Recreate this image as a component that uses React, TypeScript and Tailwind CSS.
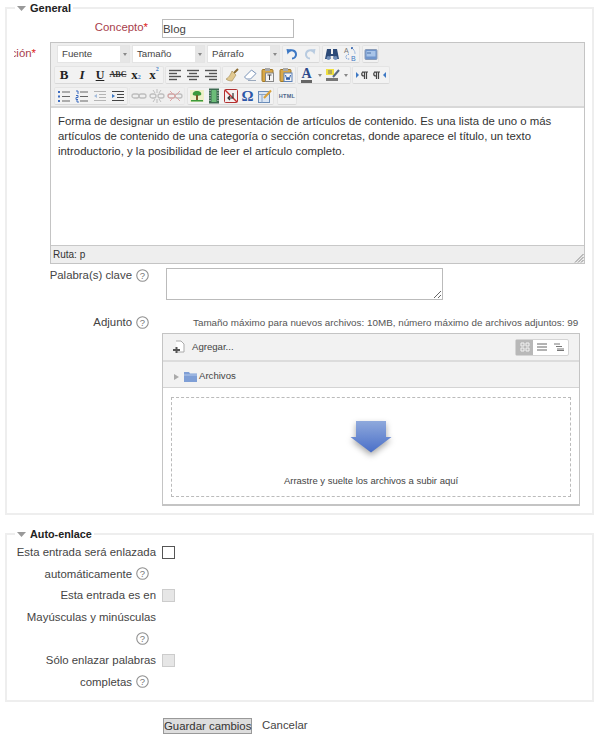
import type { ReactNode } from "react";

function Svg({ children, w = 16, h = 16 }: { children: ReactNode; w?: number; h?: number }) {
    return (
        <svg width={w} height={h} viewBox={`0 0 ${w} ${h}`} fill="none">
            {children}
        </svg>
    )
}

function Lines({ rows, color = "#555" }: { rows: [number, number][]; color?: string }) {
    return (
        <Svg w={14} h={12}>
            {rows.map(([x1, x2], i) => (
                <path key={i} d={`M${x1} ${1.5 + i * 3}H${x2}`} stroke={color} strokeWidth="1.4" />
            ))}
        </Svg>
    )
}

function Btn({ children, w = "w-[18px]" }: { children: ReactNode; w?: string }) {
    return <div className={`${w} h-[16px] flex items-center justify-center shrink-0`}>{children}</div>
}

function Group({ children, off }: { children: ReactNode; off?: boolean }) {
    return (
        <div className={`flex items-center h-[18px] border border-[#e4e4e4] border-b-[#d8d8d8] rounded-[2px] bg-[#f2f2f2] shrink-0 ${off ? "opacity-40" : ""}`}>
            {children}
        </div>
    )
}

function Caret() {
    return <span className="w-0 h-0 border-x-[2.5px] border-x-transparent border-t-[3px] border-t-[#888]" />
}

function Select({ label }: { label: string }) {
    return (
        <div className="flex w-[73px] h-[18px] border border-[#e4e4e4] shrink-0">
            <div className="w-[62px] bg-white pl-[4px] text-[9.7px] leading-[16px] text-[#444]">{label}</div>
            <div className="flex-1 bg-[#e6e6e6] flex items-center justify-center">
                <Caret />
            </div>
        </div>
    )
}

function Help() {
    return (
        <svg width="13" height="13" viewBox="0 0 13 13" className="inline-block ml-[4px] mr-[7px] align-[-2.5px]">
            <circle cx="6.5" cy="6.5" r="5.75" fill="#fff" stroke="#909090" strokeWidth="1.1" />
            <text x="6.5" y="10" textAnchor="middle" fontSize="9.5" fontFamily="Liberation Sans" fill="#777">?</text>
        </svg>
    )
}

function Triangle() {
    return (
        <svg width="9" height="5" viewBox="0 0 9 5" className="shrink-0">
            <path d="M0 0H9L4.5 5Z" fill="#999" />
        </svg>
    )
}

function Legend({ title, size }: { title: string; size: string }) {
    return (
        <legend className="ml-[8px] px-[2px]">
            <div className={`flex items-center gap-[4px] h-[14px] ${size} font-bold text-[#222]`}>
                <Triangle />
                {title}
            </div>
        </legend>
    )
}

function Toolbar() {
    return (
        <div className="h-[65px] bg-[#eeeeee] border-b-2 border-[#d8d8d8] pt-[2px]">
            <div className="flex items-center gap-[2px] ml-[6px] h-[18px]">
                <Select label="Fuente" />
                <Select label="Tamaño" />
                <Select label="Párrafo" />
                <Group>
                    <Btn>
                        <Svg>
                            <path d="M5 5.5C7 3.5 11.5 4 12 8C12.3 11 10 12.5 8 12.5" stroke="#3d78c4" strokeWidth="2" />
                            <path d="M2.5 3L7.5 3.5L3.5 8.5Z" fill="#3d78c4" />
                        </Svg>
                    </Btn>
                    <Btn>
                        <Svg>
                            <path d="M11 5.5C9 3.5 4.5 4 4 8C3.7 11 6 12.5 8 12.5" stroke="#b8cbe0" strokeWidth="2" />
                            <path d="M13.5 3L8.5 3.5L12.5 8.5Z" fill="#b8cbe0" />
                        </Svg>
                    </Btn>
                </Group>
                <Group>
                    <Btn>
                        <Svg>
                            <path d="M3 3H7V8H9V3H13L15 13H9.5V10H6.5V13H1Z" fill="#2c4a78" />
                            <circle cx="4.5" cy="12" r="2" fill="#6f8db8" />
                            <circle cx="11.5" cy="12" r="2" fill="#6f8db8" />
                        </Svg>
                    </Btn>
                    <Btn>
                        <Svg>
                            <text x="2" y="7" fontSize="7" fontFamily="Liberation Sans" fill="#777">A</text>
                            <text x="9" y="15" fontSize="7" fontFamily="Liberation Sans" fill="#3d78c4">B</text>
                            <path d="M9 2.5C12 3 13 5 13 8M7 8C4 9 3 11 5 13H8" stroke="#5a8ad0" strokeWidth="1" strokeDasharray="1 1" />
                            <circle cx="10" cy="2" r="1" fill="#2c5ca8" />
                        </Svg>
                    </Btn>
                </Group>
                <Group>
                    <Btn w="w-[15px]">
                        <Svg w={14} h={13}>
                            <rect x="1" y="1.5" width="12" height="10" rx="1" fill="#6f95cc" stroke="#8a9cb8" />
                            <rect x="2.5" y="3" width="9" height="5.5" fill="#a8c4e8" />
                            <path d="M3 5H7" stroke="#4a70a8" />
                        </Svg>
                    </Btn>
                </Group>
            </div>
            <div className="flex items-center gap-[1px] ml-[3px] mt-[3px] h-[18px]">
                <Group>
                    <Btn><span className="font-['Liberation_Serif'] font-bold text-[13px] text-[#222]">B</span></Btn>
                    <Btn><span className="font-['Liberation_Serif'] font-bold italic text-[13px] text-[#222]">I</span></Btn>
                    <Btn><span className="font-['Liberation_Serif'] font-bold underline text-[12px] text-[#222]">U</span></Btn>
                    <Btn><span className="font-['Liberation_Serif'] font-bold line-through text-[8px] text-[#333]">ABC</span></Btn>
                    <Btn><span className="font-['Liberation_Serif'] font-bold text-[13px] text-[#222]">x<span className="text-[6px] text-[#3d78c4]">2</span></span></Btn>
                    <Btn><span className="font-['Liberation_Serif'] font-bold text-[13px] text-[#222] flex items-start">x<span className="text-[6px] leading-[8px] text-[#3d78c4]">2</span></span></Btn>
                </Group>
                <Group>
                    <Btn><Lines rows={[[1, 13], [1, 9], [1, 13], [1, 9]]} /></Btn>
                    <Btn><Lines rows={[[1, 13], [3, 11], [1, 13], [3, 11]]} /></Btn>
                    <Btn><Lines rows={[[1, 13], [5, 13], [1, 13], [5, 13]]} /></Btn>
                </Group>
                <Group>
                    <Btn>
                        <Svg>
                            <path d="M10 6L14 2" stroke="#8a6a30" strokeWidth="2" />
                            <path d="M8 4L12 8L8 14C5 14 3 13 2 12C4 11 6 9 8 4Z" fill="#e0c890" stroke="#a08850" strokeWidth=".6" />
                        </Svg>
                    </Btn>
                    <Btn>
                        <Svg>
                            <path d="M9.5 3L14 6.5L8.5 12H4.5L2.5 10Z" fill="#fff" stroke="#7a93b8" />
                            <path d="M6 13.5H14" stroke="#9aa8bc" />
                        </Svg>
                    </Btn>
                    <Btn>
                        <Svg>
                            <rect x="2" y="2.5" width="11" height="12" rx="1" fill="#d8a848" stroke="#a07828" />
                            <rect x="5" y="1" width="5" height="3" fill="#a8a8a8" />
                            <rect x="5.5" y="6" width="8" height="8.5" fill="#f4f4f4" stroke="#888" />
                            <path d="M7.5 8H11.5M9.5 8V13" stroke="#444" />
                        </Svg>
                    </Btn>
                    <Btn>
                        <Svg>
                            <rect x="2" y="2.5" width="11" height="12" rx="1" fill="#d8a848" stroke="#a07828" />
                            <rect x="5" y="1" width="5" height="3" fill="#a8a8a8" />
                            <rect x="6" y="6" width="8" height="8.5" fill="#f4f4f4" stroke="#5a80b8" />
                            <path d="M7.5 8L9 13L10 10L11 13L12.5 8" stroke="#2c5ca8" />
                        </Svg>
                    </Btn>
                </Group>
                <Group>
                    <div className="w-[17px] flex justify-center">
                        <span className="font-['Liberation_Serif'] font-bold text-[14px] leading-[13px] text-[#2c4a8c] border-b-[3px] border-[#666]">A</span>
                    </div>
                    <div className="w-[9px] flex justify-center"><Caret /></div>
                    <div className="w-[17px] flex justify-center">
                        <Svg>
                            <rect x="1" y="2" width="8" height="6" fill="#f0e040" />
                            <path d="M8 10L14 3" stroke="#5a6a80" strokeWidth="2" />
                            <path d="M3 4H7M3 6H7" stroke="#777" />
                            <path d="M1 12.5H13" stroke="#777" strokeWidth="3" />
                        </Svg>
                    </div>
                    <div className="w-[9px] flex justify-center"><Caret /></div>
                </Group>
                <Group>
                    <Btn>
                        <Svg>
                            <path d="M2 5L5 8L2 11Z" fill="#3d78c4" />
                            <path d="M8 5H14M10 5C7 5 7 9 10 9M10.5 5V12M12.5 5V12" stroke="#444" strokeWidth="1.2" />
                        </Svg>
                    </Btn>
                    <Btn>
                        <Svg>
                            <path d="M14 5L11 8L14 11Z" fill="#3d78c4" />
                            <path d="M2 5H8M4 5C1 5 1 9 4 9M4.5 5V12M6.5 5V12" stroke="#444" strokeWidth="1.2" />
                        </Svg>
                    </Btn>
                </Group>
            </div>
            <div className="flex items-center ml-[3px] mt-[3px] h-[18px]">
                <Group>
                    <Btn>
                        <Svg w={14} h={13}>
                            <path d="M1 2H3M1 6.5H3M1 11H3" stroke="#3d6cc0" strokeWidth="2" />
                            <path d="M5 2H13M5 6.5H13M5 11H13" stroke="#666" />
                        </Svg>
                    </Btn>
                    <Btn>
                        <Svg w={14} h={13}>
                            <path d="M1 1H3V4M1 5.5H3V7.5H1V9.5H3M1 11H3V13" stroke="#3d6cc0" />
                            <path d="M5 2H13M5 6.5H13M5 11H13" stroke="#666" />
                        </Svg>
                    </Btn>
                    <Btn>
                        <Svg w={14} h={13}>
                            <path d="M1 1.5H13M6 4.5H13M6 7.5H13M1 10.5H13" stroke="#b4b4b4" />
                            <path d="M4 4L1 6L4 8Z" fill="#a4bcdc" />
                        </Svg>
                    </Btn>
                    <Btn>
                        <Svg w={14} h={13}>
                            <path d="M1 1.5H13M6 4.5H13M6 7.5H13M1 10.5H13" stroke="#444" />
                            <path d="M1 4L4 6L1 8Z" fill="#3d78c4" />
                        </Svg>
                    </Btn>
                </Group>
                <div className="ml-[1px]">
                    <Group off>
                        <Btn>
                            <Svg>
                                <rect x="1" y="6" width="7" height="4" rx="2" stroke="#777" strokeWidth="1.3" />
                                <rect x="8" y="6" width="7" height="4" rx="2" stroke="#777" strokeWidth="1.3" />
                            </Svg>
                        </Btn>
                        <Btn>
                            <Svg>
                                <rect x="1" y="6" width="6" height="4" rx="2" stroke="#777" strokeWidth="1.3" />
                                <rect x="9" y="6" width="6" height="4" rx="2" stroke="#777" strokeWidth="1.3" />
                                <path d="M8 1V5M8 11V15M4 2L6 5M12 2L10 5M4 14L6 11M12 14L10 11" stroke="#777" />
                            </Svg>
                        </Btn>
                        <Btn>
                            <Svg>
                                <rect x="1" y="6" width="7" height="4" rx="2" stroke="#a03030" strokeWidth="1.3" />
                                <rect x="8" y="6" width="7" height="4" rx="2" stroke="#777" strokeWidth="1.3" />
                                <path d="M3 3L13 13M13 3L3 13" stroke="#c04040" />
                            </Svg>
                        </Btn>
                    </Group>
                </div>
                <div className="ml-[2px]">
                    <Group>
                        <Btn w="w-[17px]">
                            <Svg>
                                <rect x="1" y="2" width="14" height="12" fill="#eef0c8" />
                                <path d="M8 3C11 3 13 5 12 7C11 8 5 8 4 7C3 5 5 3 8 3Z" fill="#3c9a3c" />
                                <path d="M7 7H9V12H7Z" fill="#7a5a28" />
                                <path d="M2 12H14V13.5H2Z" fill="#3c9a3c" />
                            </Svg>
                        </Btn>
                        <Btn w="w-[17px]">
                            <Svg>
                                <rect x="3" y="0.5" width="10" height="15" fill="#3c6a50" />
                                <rect x="5.5" y="2" width="5" height="12" fill="#6cbc78" />
                                <path d="M4 2V14M12 2V14" stroke="#ddd" strokeDasharray="1 1.5" />
                            </Svg>
                        </Btn>
                        <Btn w="w-[17px]">
                            <Svg>
                                <rect x="1.5" y="1.5" width="13" height="13" rx="1" fill="#f4f0f0" stroke="#b03030" />
                                <path d="M2 2L14 14" stroke="#c83030" strokeWidth="1.4" />
                                <path d="M10 5V10H5M7 8L5 10L7 12" stroke="#333" strokeWidth="1.2" />
                            </Svg>
                        </Btn>
                        <Btn w="w-[17px]">
                            <span className="font-['Liberation_Serif'] font-bold text-[15px] leading-none text-[#2c56a8]">Ω</span>
                        </Btn>
                        <Btn w="w-[17px]">
                            <Svg>
                                <rect x="1.5" y="3.5" width="11" height="11" fill="#dbe6f4" stroke="#6a8cb8" />
                                <path d="M1.5 6.5H12.5M5 6.5V14.5" stroke="#8aa4c8" />
                                <path d="M7 10L14 2.5" stroke="#d8a038" strokeWidth="2" />
                            </Svg>
                        </Btn>
                    </Group>
                </div>
                <div className="ml-[3px]">
                    <Group>
                        <div className="w-[18px] text-center text-[5.5px] font-bold text-[#4a6488] tracking-[0.3px]">HTML</div>
                    </Group>
                </div>
            </div>
        </div>
    )
}

function Editor() {
    return (
        <div className="w-[535px] h-[222px] border border-[#c4c4c4] flex flex-col shrink-0">
            <Toolbar />
            <div className="flex-1 bg-white px-[7px] pt-[6px] leading-[15px] text-[#333] whitespace-nowrap">
                Forma de designar un estilo de presentación de artículos de contenido. Es una lista de uno o más<br />
                artículos de contenido de una categoría o sección concretas, donde aparece el título, un texto<br />
                introductorio, y la posibilidad de leer el artículo completo.
            </div>
            <div className="h-[18px] bg-[#eeeeee] border-t border-[#c8c8c8] flex items-center justify-between pl-[2px] text-[10px] text-[#333]">
                Ruta: p
                <svg width="10" height="10" viewBox="0 0 10 10" className="self-end">
                    <path d="M9.5 1L1 9.5M9.5 4L4 9.5M9.5 7L7 9.5" stroke="#888" />
                </svg>
            </div>
        </div>
    )
}

function FilePicker() {
    return (
        <div className="w-[418px] h-[173px] ml-[155px] mt-[3px] border border-[#c4c4c4] border-b-2 flex flex-col">
            <div className="h-[28px] bg-[#f2f2f2] border-b-2 border-[#dcdcdc] flex items-center pl-[9px] pr-[10px] text-[9.6px] text-[#444]">
                <Svg w={13} h={14}>
                    <path d="M4 1H9L12 4V12H5" fill="#fff" stroke="#aaa" />
                    <path d="M1 10H8M4.5 7V13" stroke="#555" strokeWidth="2" />
                </Svg>
                <span className="ml-[7px]">Agregar...</span>
                <div className="ml-auto flex h-[17px] w-[54px] border border-[#d4d4d4] rounded-[2px] bg-white">
                    <div className="w-[18px] bg-[#b8b8b8] flex items-center justify-center">
                        <Svg w={10} h={10}>
                            <path d="M1 1H4V4H1ZM6 1H9V4H6ZM1 6H4V9H1ZM6 6H9V9H6Z" stroke="#f2f2f2" />
                        </Svg>
                    </div>
                    <div className="w-[18px] flex items-center justify-center">
                        <Svg w={10} h={8}>
                            <path d="M0 1H10M0 4H10M0 7H10" stroke="#666" />
                        </Svg>
                    </div>
                    <div className="w-[18px] flex items-center justify-center">
                        <Svg w={10} h={8}>
                            <path d="M0 1H6M2 3.5H8M3 6H10M3 7.5H10" stroke="#777" />
                        </Svg>
                    </div>
                </div>
            </div>
            <div className="h-[26px] bg-[#f2f2f2] border-b border-[#d4d4d4] flex items-center pt-[4px] pl-[11px] text-[9.6px] text-[#444]">
                <span className="w-0 h-0 border-y-[3px] border-y-transparent border-l-[5px] border-l-[#aaa]" />
                <svg width="13" height="11" viewBox="0 0 13 11" className="ml-[5px]">
                    <path d="M0 1H5L6 2.5H13V11H0Z" fill="#7f9fd6" />
                    <path d="M0 4H13" stroke="#b6c9ea" />
                </svg>
                <span className="ml-[2px]">Archivos</span>
            </div>
            <div className="flex-1 bg-white px-[8px] pt-[9px]">
                <div className="h-[100px] border border-dashed border-[#bbb] flex flex-col items-center pt-[23px]">
                    <svg width="42" height="32" viewBox="0 0 42 32" className="drop-shadow-[0_3px_3px_rgba(0,0,0,0.35)]">
                        <defs>
                            <linearGradient id="arrow" x1="0" y1="0" x2="0" y2="1">
                                <stop offset="0" stopColor="#8fa9dc" />
                                <stop offset="1" stopColor="#4a6fc8" />
                            </linearGradient>
                        </defs>
                        <path d="M6 0H36V16H41.5L21 31.5L0.5 16H6Z" fill="url(#arrow)" />
                    </svg>
                    <div className="mt-[22px] text-[9.5px] leading-[12px] text-[#444]">Arrastre y suelte los archivos a subir aquí</div>
                </div>
            </div>
        </div>
    )
}

function Check({ disabled }: { disabled?: boolean }) {
    return (
        <input
            type="checkbox"
            disabled={disabled}
            className={`appearance-none block w-[13px] h-[13px] mt-[4px] ml-[6px] border ${disabled ? "border-[#cccccc] bg-[#e6e6e6]" : "border-[#555] bg-white"}`}
        />
    )
}

function AutoRow({ children, disabled }: { children: ReactNode; disabled?: boolean }) {
    return (
        <div className="flex items-start">
            <div className="w-[149px] text-right leading-[21.6px]">{children}</div>
            <Check disabled={disabled} />
        </div>
    )
}

export default function App() {
    return (
        <div className="w-[600px] h-[736px] overflow-hidden bg-white font-['Liberation_Sans',Arial,sans-serif] text-[11.4px] text-[#444]">
            <div className="pt-px px-[5px]">
                <fieldset className="w-[589px] border-2 border-[#eeeeee] pb-[7px]">
                    <Legend title="General" size="text-[11px]" />
                    <div className="flex items-start mt-[4px]">
                        <div className="w-[141px] text-right leading-[17px] text-[#a8404c]">
                            Concepto<span className="text-[#e02020]">*</span>
                        </div>
                        <input
                            readOnly
                            defaultValue="Blog"
                            className="ml-[14px] w-[132px] h-[19px] border border-[#bbbbbb] px-0 text-[11.4px] text-[#444] outline-none"
                        />
                    </div>
                    <div className="flex items-start mt-[4px]">
                        <div className="w-[22px] ml-[7px] overflow-hidden flex justify-end pt-[3px] text-[#a8404c]">
                            <span className="shrink-0">ción<span className="text-[#e02020]">*</span></span>
                        </div>
                        <div className="ml-[14px]">
                            <Editor />
                        </div>
                    </div>
                    <div className="flex items-start mt-[4px]">
                        <div className="w-[149px] text-right leading-[15px] whitespace-nowrap">
                            Palabra(s) clave<Help />
                        </div>
                        <textarea
                            readOnly
                            className="ml-[10px] w-[277px] h-[32px] border border-[#bbbbbb] outline-none"
                        />
                    </div>
                    <div className="flex items-center mt-[16px] h-[14px]">
                        <div className="w-[149px] text-right">
                            Adjunto<Help />
                        </div>
                        <div className="ml-[37px] text-[9.85px] text-[#555] whitespace-nowrap">
                            Tamaño máximo para nuevos archivos: 10MB, número máximo de archivos adjuntos: 99
                        </div>
                    </div>
                    <FilePicker />
                </fieldset>
                <fieldset className="w-[589px] mt-[12px] border-2 border-[#eeeeee] pb-[7px]">
                    <Legend title="Auto-enlace" size="text-[10.8px]" />
                    <div className="pt-[1px]">
                        <AutoRow>
                            Esta entrada será enlazada<br />
                            automáticamente<Help />
                        </AutoRow>
                        <AutoRow disabled>
                            Esta entrada es en<br />
                            Mayúsculas y minúsculas<br />
                            <Help />
                        </AutoRow>
                        <AutoRow disabled>
                            Sólo enlazar palabras<br />
                            completas<Help />
                        </AutoRow>
                    </div>
                </fieldset>
                <div className="flex items-center mt-[15px] ml-[158px]">
                    <button className="w-[89px] h-[16px] bg-[#dddddd] border border-[#999] leading-[14px] text-[#333] whitespace-nowrap">
                        Guardar cambios
                    </button>
                    <span className="ml-[10px]">Cancelar</span>
                </div>
            </div>
        </div>
    )
}
